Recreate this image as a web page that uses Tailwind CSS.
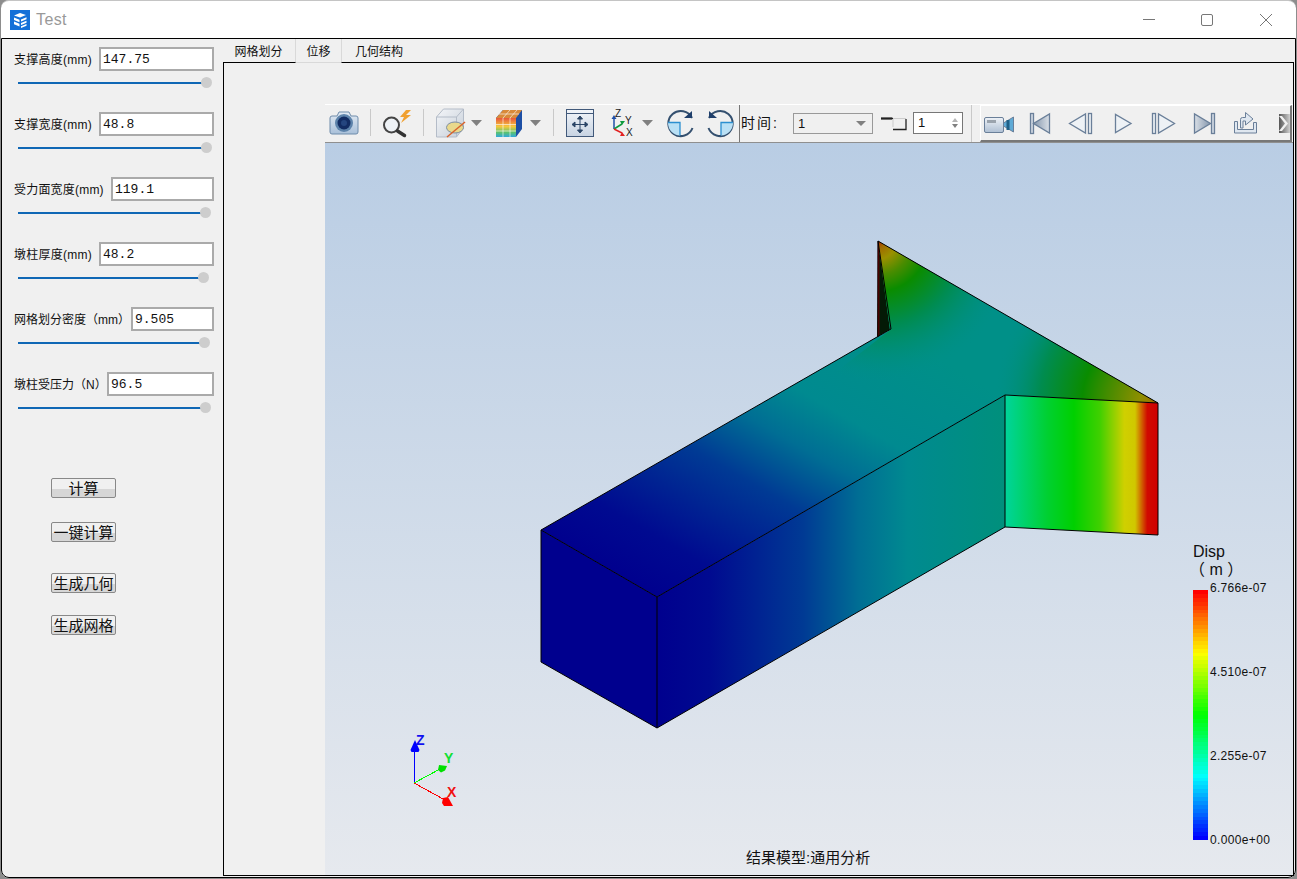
<!DOCTYPE html>
<html lang="zh">
<head>
    <meta charset="UTF-8">
    <title>Test</title>
    <script src="https://cdn.jsdelivr.net/npm/@tailwindcss/browser@4"></script>
</head>
<body class="w-[1297px] h-[879px] overflow-hidden bg-[#8d8d8d] font-['Liberation_Sans','Noto_Sans_CJK_SC',sans-serif] text-[12px] text-[#111]">

<!-- Window -->
<div class="h-[878px] w-[1295px] ml-px flex flex-col bg-white rounded-t-lg rounded-b-lg border-t border-[#c4c4c4]">

    <!-- Title bar -->
    <header class="h-[37px] shrink-0 flex items-center pl-[9px]">
        <svg width="20" height="20" viewBox="0 0 20 20">
            <rect width="20" height="20" fill="#1470d8"/>
            <path d="M4 5.500l6-2.500 6 2-6 2.500zM4 7.500l5.500 2.200v2.500l-5.500-2.200zM4 11.500l5.500 2.200v2.800l-5.500-2.200zM11 9.500l5.500-2.200v2l-5.500 2.200zM11 13l5.500-2.200v2l-5.500 2.200zM11 16.200l5.500-2.200v1.800l-5.500 2.200z" fill="#fff"/>
        </svg>
        <span class="ml-[6px] pt-px text-[16px] text-[#999] tracking-[0.4px]">Test</span>
        <div class="ml-auto flex items-center">
            <div class="w-[12px] h-px bg-[#777] mr-[46px]"></div>
            <div class="w-[12px] h-[12px] border border-[#777] rounded-[2px] mr-[47px]"></div>
            <svg width="12" height="12" viewBox="0 0 12 12" class="mr-[24px]"><path d="M0 0l12 12M12 0L0 12" stroke="#777"/></svg>
        </div>
    </header>

    <!-- Client area -->
    <div class="flex-1 flex bg-[#f0f0f0] border border-black rounded-b-lg min-h-0">

        <!-- Parameter panel -->
        <aside class="w-[221px] shrink-0 flex flex-col pt-[8px] pl-[12px] pr-[9px]">
            <div class="h-[65px]">
                <div class="flex items-center justify-between h-[24px]">
                    <label class="mt-[2px] tracking-[0.25px]">支撑高度(mm)</label>
                    <input value="147.75" class="w-[115px] h-[24px] pt-px bg-white border-2 border-[#aaa] px-[2px] font-['Liberation_Mono'] text-[13px]">
                </div>
                <div class="relative h-[2px] mt-[11px] ml-[4px] w-[188px] bg-[#0f67b5]"><span class="absolute right-[-6px] top-[-5px] w-[11px] h-[11px] rounded-full bg-[#cdcdcd]"></span></div>
            </div>
            <div class="h-[65px]">
                <div class="flex items-center justify-between h-[24px]">
                    <label class="mt-[2px] tracking-[0.25px]">支撑宽度(mm)</label>
                    <input value="48.8" class="w-[115px] h-[24px] pt-px bg-white border-2 border-[#aaa] px-[2px] font-['Liberation_Mono'] text-[13px]">
                </div>
                <div class="relative h-[2px] mt-[11px] ml-[4px] w-[188px] bg-[#0f67b5]"><span class="absolute right-[-6px] top-[-5px] w-[11px] h-[11px] rounded-full bg-[#cdcdcd]"></span></div>
            </div>
            <div class="h-[65px]">
                <div class="flex items-center justify-between h-[24px]">
                    <label class="mt-[2px] tracking-[0.2px]">受力面宽度(mm)</label>
                    <input value="119.1" class="w-[103px] h-[24px] pt-px bg-white border-2 border-[#aaa] px-[2px] font-['Liberation_Mono'] text-[13px]">
                </div>
                <div class="relative h-[2px] mt-[11px] ml-[4px] w-[187px] bg-[#0f67b5]"><span class="absolute right-[-6px] top-[-5px] w-[11px] h-[11px] rounded-full bg-[#cdcdcd]"></span></div>
            </div>
            <div class="h-[65px]">
                <div class="flex items-center justify-between h-[24px]">
                    <label class="mt-[2px] tracking-[0.25px]">墩柱厚度(mm)</label>
                    <input value="48.2" class="w-[115px] h-[24px] pt-px bg-white border-2 border-[#aaa] px-[2px] font-['Liberation_Mono'] text-[13px]">
                </div>
                <div class="relative h-[2px] mt-[11px] ml-[4px] w-[185px] bg-[#0f67b5]"><span class="absolute right-[-6px] top-[-5px] w-[11px] h-[11px] rounded-full bg-[#cdcdcd]"></span></div>
            </div>
            <div class="h-[65px]">
                <div class="flex items-center justify-between h-[24px]">
                    <label class="mt-[2px]">网格划分密度（mm）</label>
                    <input value="9.505" class="w-[83px] h-[24px] pt-px bg-white border-2 border-[#aaa] px-[2px] font-['Liberation_Mono'] text-[13px]">
                </div>
                <div class="relative h-[2px] mt-[11px] ml-[4px] w-[186px] bg-[#0f67b5]"><span class="absolute right-[-6px] top-[-5px] w-[11px] h-[11px] rounded-full bg-[#cdcdcd]"></span></div>
            </div>
            <div class="h-[65px]">
                <div class="flex items-center justify-between h-[24px]">
                    <label class="mt-[2px]">墩柱受压力（N）</label>
                    <input value="96.5" class="w-[107px] h-[24px] pt-px bg-white border-2 border-[#aaa] px-[2px] font-['Liberation_Mono'] text-[13px]">
                </div>
                <div class="relative h-[2px] mt-[11px] ml-[4px] w-[187px] bg-[#0f67b5]"><span class="absolute right-[-6px] top-[-5px] w-[11px] h-[11px] rounded-full bg-[#cdcdcd]"></span></div>
            </div>

            <!-- Actions -->
            <div class="flex flex-col items-start ml-[37px] mt-[41px]">
                <button class="w-[65px] h-[20px] text-[15px] leading-none rounded-[2px] border border-[#888] bg-[linear-gradient(#f0f0f0_55%,#d6d6d6_55%)]">计算</button>
                <button class="w-[65px] h-[20px] mt-[24px] text-[15px] leading-none rounded-[2px] border border-[#888] bg-[linear-gradient(#f0f0f0_55%,#d6d6d6_55%)]">一键计算</button>
                <button class="w-[65px] h-[20px] mt-[31px] text-[15px] leading-none rounded-[2px] border border-[#888] bg-[linear-gradient(#f0f0f0_55%,#d6d6d6_55%)]">生成几何</button>
                <button class="w-[65px] h-[20px] mt-[22px] text-[15px] leading-none rounded-[2px] border border-[#888] bg-[linear-gradient(#f0f0f0_55%,#d6d6d6_55%)]">生成网格</button>
            </div>
        </aside>

        <!-- Tabs and result pane -->
        <main class="flex-1 flex flex-col min-w-0 pr-px pb-px">
            <nav class="h-[24px] shrink-0 flex">
                <div class="w-[73px] pt-[2px] pr-px flex items-center justify-center border-b border-black border-r border-r-[#d9d9d9]">网格划分</div>
                <div class="w-[45px] pt-[2px] flex items-center justify-center border-b border-[#d9d9d9]">位移</div>
                <div class="w-[75px] pt-[2px] flex items-center justify-center border-b border-black border-l border-l-[#d9d9d9]">几何结构</div>
                <div class="flex-1 border-b border-black"></div>
            </nav>
            <section class="flex-1 min-h-0 border-l border-r border-b border-black pl-[101px] pt-[41px] flex flex-col">

                <!-- Toolbars -->
                <div class="h-[39px] shrink-0 flex bg-[#f0f0f0] border-t border-white border-b border-b-[#8f8f8f] pt-[3px]">
                    <svg width="414" height="34" viewBox="325 108 414 34" class="shrink-0">
                        <defs>
                            <linearGradient id="camBody" x1="0" y1="0" x2="0" y2="1"><stop offset="0" stop-color="#e3ebf4"/><stop offset="1" stop-color="#a9c0d9"/></linearGradient>
                            <linearGradient id="boxFace" x1="0" y1="0" x2="1" y2="1"><stop offset="0" stop-color="#f4f6f9"/><stop offset="1" stop-color="#c6ced8"/></linearGradient>
                            <linearGradient id="gridFace" x1="0" y1="0" x2="0" y2="1"><stop offset="0" stop-color="#e8553a"/><stop offset=".45" stop-color="#f5c93c"/><stop offset=".75" stop-color="#5ec36a"/><stop offset="1" stop-color="#2fa8dc"/></linearGradient>
                            <linearGradient id="fitFace" x1="0" y1="0" x2="0" y2="1"><stop offset="0" stop-color="#f3f6fa"/><stop offset="1" stop-color="#c7d3e2"/></linearGradient>
                        </defs>
                        <!-- camera -->
                        <path d="M332 116h5l2-4h10l2 4h5a2 2 0 0 1 2 2v14a2 2 0 0 1-2 2h-24a2 2 0 0 1-2-2v-14a2 2 0 0 1 2-2z" fill="url(#camBody)" stroke="#6f8cab"/>
                        <circle cx="344" cy="123" r="9" fill="#5d83ab"/><circle cx="344" cy="123" r="6.500" fill="#122c63"/><circle cx="344" cy="123" r="3" fill="#24457f"/>
                        <path d="M370.500 109v27" stroke="#c9c9c9"/>
                        <!-- magnifier with bolt -->
                        <circle cx="391.500" cy="125" r="7.500" fill="#eef2f6" stroke="#444" stroke-width="2"/>
                        <path d="M397.500 131l7 4.500" stroke="#333" stroke-width="3.500" stroke-linecap="round"/>
                        <path d="M406 110l-6 7h4l-3 6 10-8h-5l5-5z" fill="#f0a030"/>
                        <path d="M423.500 109v27" stroke="#c9c9c9"/>
                        <!-- box with hidden eye -->
                        <path d="M436.500 117l7-8h20v19l-7 9h-20z" fill="url(#boxFace)" stroke="#b4bcc8"/>
                        <path d="M436.500 117h20v20M456.500 117l7-8" fill="none" stroke="#b4bcc8"/>
                        <ellipse cx="455" cy="127.500" rx="8.500" ry="5.500" fill="#e9d98c" stroke="#7d8ea3"/>
                        <path d="M447 137l18-15" stroke="#d9622b" stroke-width="1.500"/>
                        <path d="M471 120h11l-5.500 6z" fill="#808080"/>
                        <!-- colour grid cube -->
                        <path d="M496 118l7-8h19v19l-6 8h-20z" fill="#1d4fa5"/>
                        <rect x="496" y="118" width="20" height="19" fill="url(#gridFace)"/>
                        <path d="M496 118l7-8h19l-6 8z" fill="#d98a3a"/>
                        <path d="M503 118v19M510 118v19M496 124.500h20M496 131h20M503 118l7-8M510 118l7-8M499 114h20" stroke="#fff" stroke-opacity=".6" fill="none"/>
                        <path d="M530 120h11l-5.500 6z" fill="#808080"/>
                        <path d="M553.500 109v27" stroke="#c9c9c9"/>
                        <!-- fit view -->
                        <rect x="566.500" y="109.500" width="27" height="27" fill="url(#fitFace)" stroke="#41597a"/>
                        <path d="M566 113.500h28" stroke="#41597a"/>
                        <path d="M580 118v13M573 124.500h14M580 116l-2.500 3h5zM580 133l-2.500-3h5zM572 124.500l3-2.500v5zM588 124.500l-3-2.500v5z" stroke="#2a4566" fill="#2a4566"/>
                        <!-- axes -->
                        <path d="M614 129v-11" stroke="#1f4fa8" stroke-width="1.500"/><path d="M614 115l-2.500 4h5z" fill="#1f4fa8"/>
                        <path d="M614 129l8-5" stroke="#0c9a3c" stroke-width="1.500"/><path d="M625 121l-5 0 2 4z" fill="#0c9a3c"/>
                        <path d="M614 129l8 4" stroke="#e32020" stroke-width="1.500"/><path d="M625 136l-5 0 2-4z" fill="#e32020"/>
                        <text x="615" y="117" font-size="10" fill="#222" font-family="Liberation Sans">Z</text>
                        <text x="625" y="124" font-size="10" fill="#222" font-family="Liberation Sans">Y</text>
                        <text x="626" y="136" font-size="10" fill="#222" font-family="Liberation Sans">X</text>
                        <path d="M642 120h11l-5.500 6z" fill="#808080"/>
                        <!-- rotate views -->
                        <path d="M692 118a12.500 12.500 0 1 0 .5 10" fill="none" stroke="#34506f" stroke-width="2"/>
                        <path d="M692 111v7h-8z" fill="#1f3f6b"/>
                        <path d="M668 123h12v12.500a12.500 12.500 0 0 1-12-12.500z" fill="#b9e0f5"/>
                        <path d="M668 122.500h12v13" fill="none" stroke="#2b8fd0" stroke-width="1.300"/>
                        <path d="M709 118a12.500 12.500 0 1 1-.5 10" fill="none" stroke="#34506f" stroke-width="2"/>
                        <path d="M709 111v7h8z" fill="#1f3f6b"/>
                        <path d="M733 123h-12v12.500a12.500 12.500 0 0 0 12-12.500z" fill="#b9e0f5"/>
                        <path d="M733 122.500h-12v13" fill="none" stroke="#2b8fd0" stroke-width="1.300"/>
                    </svg>

                    <div class="w-px bg-[#777] -mt-[3px] shrink-0"></div>
                    <span class="ml-px w-[52px] text-[14px] leading-[30px] tracking-[2px] shrink-0">时间:</span>
                    <div class="w-[80px] h-[21px] mt-[5px] flex items-center justify-between border border-[#999] pl-[4px] pr-[6px] text-[13px] shrink-0">1<span class="w-0 h-0 border-x-[5px] border-x-transparent border-t-[5px] border-t-[#808080]"></span></div>
                    <svg width="27" height="16" viewBox="0 0 27 16" class="ml-[7px] mt-[9px] shrink-0"><path d="M1 1.500h12M26 2v10.500H13" fill="none" stroke="#222" stroke-width="1.300"/><path d="M13 1.500h13M13 2v8" stroke="#ccc"/><path d="M1 1.500h11" stroke="#222" stroke-width="2"/></svg>
                    <div class="w-[50px] h-[22px] mt-[4px] ml-[6px] flex items-center justify-between border border-[#777] bg-white pl-[4px] pr-[4px] text-[13px] shrink-0">1
                        <span class="flex flex-col gap-[2px]"><span class="w-0 h-0 border-x-[3px] border-x-transparent border-b-[4px] border-b-[#b5b5b5]"></span><span class="w-0 h-0 border-x-[3px] border-x-transparent border-t-[4px] border-t-[#808080]"></span></span>
                    </div>
                    <div class="w-px bg-[#c9c9c9] ml-[8px] -mt-[3px] shrink-0"></div>
                    <div class="w-[8px] shrink-0"></div>

                    <div class="w-[312px] h-[37px] -mt-[3px] shrink-0 border-t border-l border-white border-r-2 border-r-[#777] border-b-2 border-b-[#777]">
                    <svg width="309" height="34" viewBox="981 106 309 34" class="block">
                        <defs>
                            <linearGradient id="camRec" x1="0" y1="0" x2="0" y2="1"><stop offset="0" stop-color="#eef2f7"/><stop offset="1" stop-color="#aebfd3"/></linearGradient>
                            <linearGradient id="tri" x1="0" y1="0" x2="1" y2="0"><stop offset="0" stop-color="#8496ac"/><stop offset="1" stop-color="#d9dfe6"/></linearGradient>
                            <linearGradient id="triR" x1="0" y1="0" x2="1" y2="0"><stop offset="0" stop-color="#d9dfe6"/><stop offset="1" stop-color="#8496ac"/></linearGradient>
                            <linearGradient id="moreFade" x1="0" y1="0" x2="1" y2="0"><stop offset="0" stop-color="#555"/><stop offset="1" stop-color="#d0d0d0"/></linearGradient>
                        </defs>
                        <rect x="984.500" y="117.500" width="19" height="15" rx="1.500" fill="url(#camRec)" stroke="#6a7f99"/>
                        <rect x="987" y="120" width="9" height="3" fill="#9aa3ad"/>
                        <path d="M1003.500 123l5-3 5-3v15l-5-3-5-3z" fill="#5eaad6" stroke="#6a7f99"/>
                        <rect x="1006.500" y="120" width="3" height="10" fill="#1e5f86"/>
                        <!-- first -->
                        <rect x="1030.500" y="113.500" width="3" height="20" fill="#cfd8e2" stroke="#6a7f99" stroke-width="1.300"/>
                        <path d="M1049.500 114v19l-16-9.500z" fill="url(#tri)" stroke="#6a7f99" stroke-width="1.300"/>
                        <!-- previous -->
                        <path d="M1085.500 114v19l-16-9.500z" fill="#eef2f6" stroke="#6a7f99" stroke-width="1.300"/>
                        <rect x="1088.500" y="113.500" width="3" height="20" fill="#eef2f6" stroke="#6a7f99" stroke-width="1.300"/>
                        <!-- play -->
                        <path d="M1115.500 114.500v18l15.500-9z" fill="#eef2f6" stroke="#6a7f99" stroke-width="1.300"/>
                        <!-- next -->
                        <rect x="1152.500" y="113.500" width="3" height="20" fill="#eef2f6" stroke="#6a7f99" stroke-width="1.300"/>
                        <path d="M1158.500 114v19l16-9.500z" fill="#eef2f6" stroke="#6a7f99" stroke-width="1.300"/>
                        <!-- last -->
                        <path d="M1194.500 114v19l16-9.500z" fill="url(#triR)" stroke="#6a7f99" stroke-width="1.300"/>
                        <rect x="1211.500" y="113.500" width="3" height="20" fill="#cfd8e2" stroke="#6a7f99" stroke-width="1.300"/>
                        <!-- export -->
                        <path d="M1234.500 121.500h3v8h16v-7h3v10.500h-22z" fill="#dfe7f0" stroke="#6a7f99"/>
                        <path d="M1240.500 128v-8.500a2 2 0 0 1 2-2h3v-5l7.500 6.500-7.500 6v-4h-2.500v7z" fill="#dfe7f0" stroke="#6a7f99"/>
                        <!-- overflow -->
                        <rect x="1279" y="114" width="11" height="19" fill="url(#moreFade)"/>
                        <path d="M1279 116l6 7.500-6 7.500 3 0 6-7.500-6-7.500z" fill="#f0f0f0"/>
                    </svg>
                    </div>
                </div>

                <!-- Result viewport -->
                <div class="relative flex-1 min-h-0 bg-[linear-gradient(#b9cde4,#e6e9ee)] overflow-hidden">
                    <svg width="969" height="732" viewBox="325 143 969 732" class="block">
                        <defs>
                            <linearGradient id="sideFace" gradientUnits="userSpaceOnUse" x1="657" y1="0" x2="1005" y2="0">
                                <stop offset="0" stop-color="#00008e"/><stop offset=".15" stop-color="#000a90"/><stop offset=".42" stop-color="#003a94"/>
                                <stop offset=".58" stop-color="#006e94"/><stop offset=".72" stop-color="#008a90"/><stop offset="1" stop-color="#00907c"/>
                            </linearGradient>
                            <linearGradient id="topAxis" gradientUnits="userSpaceOnUse" x1="657" y1="597" x2="831" y2="296">
                                <stop offset="0" stop-color="#00008e"/><stop offset=".15" stop-color="#000a90"/><stop offset=".42" stop-color="#003a94"/>
                                <stop offset=".58" stop-color="#006e94"/><stop offset=".72" stop-color="#008a90"/><stop offset="1" stop-color="#009088"/>
                            </linearGradient>
                            <linearGradient id="endFace" gradientUnits="userSpaceOnUse" x1="1005" y1="0" x2="1158" y2="0">
                                <stop offset="0" stop-color="#00d49c"/><stop offset=".28" stop-color="#00d030"/><stop offset=".45" stop-color="#00d000"/>
                                <stop offset=".62" stop-color="#40d000"/><stop offset=".78" stop-color="#cfd000"/><stop offset=".85" stop-color="#d0c800"/>
                                <stop offset=".93" stop-color="#d00a00"/><stop offset="1" stop-color="#d00000"/>
                            </linearGradient>
                            <radialGradient id="tipGlow" gradientUnits="userSpaceOnUse" cx="878" cy="241" r="140">
                                <stop offset="0" stop-color="#b02000"/><stop offset=".05" stop-color="#a06a00"/><stop offset=".13" stop-color="#9a9000"/>
                                <stop offset=".24" stop-color="#4a8c00"/><stop offset=".36" stop-color="#0a8c00"/><stop offset=".6" stop-color="#008c50"/>
                                <stop offset="1" stop-color="#009088" stop-opacity="0"/>
                            </radialGradient>
                            <radialGradient id="cornerGlow" gradientUnits="userSpaceOnUse" cx="1158" cy="403" r="165">
                                <stop offset="0" stop-color="#a06a00"/><stop offset=".11" stop-color="#8f8f00"/><stop offset=".28" stop-color="#508c00"/>
                                <stop offset=".46" stop-color="#0a8c00"/><stop offset=".72" stop-color="#008c50"/><stop offset="1" stop-color="#009088" stop-opacity="0"/>
                            </radialGradient>
                        </defs>
                        <polygon points="878,241 891,329 877,337" fill="#041a06"/>
                        <path d="M878.500 242v94" stroke="#8e0000" stroke-width="1.500"/>
                        <polygon points="541,530 877,337 890,330 878,241 1158,403 1005,395 657,597" fill="url(#topAxis)"/>
                        <polygon points="890,330 878,241 1158,403 1005,395 900,456 800,400" fill="url(#tipGlow)"/>
                        <polygon points="890,330 878,241 1158,403 1005,395" fill="url(#cornerGlow)"/>
                        <polygon points="541,530 657,597 657,728 541,662" fill="#00008e"/>
                        <polygon points="657,597 1005,395 1005,527 657,728" fill="url(#sideFace)"/>
                        <polygon points="1005,395 1158,403 1158,535 1005,527" fill="url(#endFace)"/>
                        <path d="M541 530L877 337M878 241L1158 403V535L1005 527L657 728L541 662V530L657 597L1005 395L1158 403M657 597V728M1005 395V527M878 241V337M878 241L891 329L877 337" fill="none" stroke="#000"/>
                        <!-- axis triad -->
                        <path d="M414.500 783V750" stroke="#0000ff"/><path d="M415 740l-4.500 10 1 2h7l1-2z" fill="#0000ff"/>
                        <path d="M414 783L440 769" stroke="#00ff00" shape-rendering="crispEdges"/><path d="M447 766l-8-1-1 5 3 2.500 4-2z" fill="#00e000"/>
                        <path d="M414 783L445 800" stroke="#ff0000" shape-rendering="crispEdges"/><path d="M453 806l-5-9-5 1-1 5 2 3z" fill="#ff0000"/>
                        <text x="416" y="745" font-size="14" font-weight="700" fill="#1010f0" font-family="Liberation Sans">Z</text>
                        <text x="444" y="763" font-size="14" font-weight="700" fill="#10e030" font-family="Liberation Sans">Y</text>
                        <text x="447" y="797" font-size="14" font-weight="700" fill="#f01010" font-family="Liberation Sans">X</text>
                    </svg>

                    <!-- Legend -->
                    <div class="absolute left-[868px] top-[400px] text-[16px] leading-[18px]">Disp<br><span class="-ml-[4px]">（ m ）</span></div>
                    <div id="legend-bar" class="absolute left-[868px] top-[447px] w-[15px] h-[250px] flex flex-col"></div>
                    <span class="absolute left-[885px] top-[436px] text-[12px] tracking-[0.3px]">6.766e-07</span>
                    <span class="absolute left-[885px] top-[520px] text-[12px] tracking-[0.3px]">4.510e-07</span>
                    <span class="absolute left-[885px] top-[604px] text-[12px] tracking-[0.3px]">2.255e-07</span>
                    <span class="absolute left-[885px] top-[688px] text-[12px] tracking-[0.35px]">0.000e+00</span>
                    <span class="absolute left-[421px] top-[704px] text-[15px]">结果模型:通用分析</span>
                </div>
            </section>
        </main>
    </div>
</div>

<script>
    // Colour bar bands, red at the top to blue at the bottom
    const bar = document.getElementById("legend-bar");
    for (let i = 0; i < 64; i++) {
        const band = document.createElement("div");
        band.className = "flex-1";
        band.style.background = `hsl(${Math.round(i / 63 * 240)},100%,50%)`;
        bar.appendChild(band);
    }
</script>

</body>
</html>
